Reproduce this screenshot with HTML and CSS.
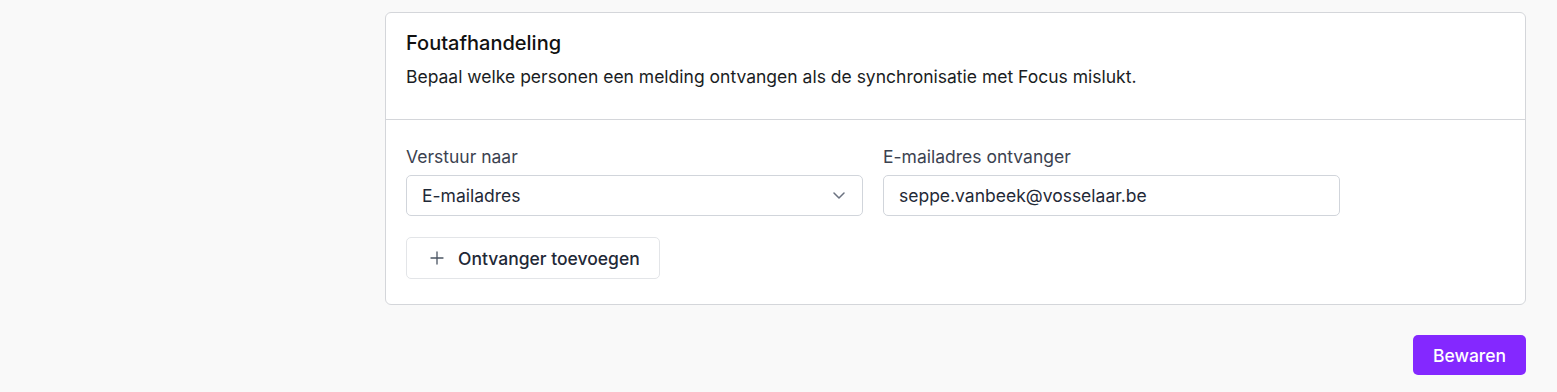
FILE: index.html
```html
<!DOCTYPE html>
<html lang="nl">
<head>
    <meta charset="UTF-8">
    <title>Foutafhandeling</title>
    <link rel="stylesheet" href="styles.css">
</head>
<body>
    <main class="content">
        <section class="card">
            <div class="card-header">
                <h2>Foutafhandeling</h2>
                <p>Bepaal welke personen een melding ontvangen als de synchronisatie met Focus mislukt.</p>
            </div>
            <div class="card-body">
                <div class="fields">
                    <div class="field">
                        <label for="send-to">Verstuur naar</label>
                        <div class="select" id="send-to">
                            <span>E-mailadres</span>
                            <svg width="12" height="7" viewBox="0 0 12 7" fill="none" stroke="#6b7280" stroke-width="1.5" stroke-linecap="round" stroke-linejoin="round"><path d="M1 1l5 5 5-5"/></svg>
                        </div>
                    </div>
                    <div class="field">
                        <label for="email">E-mailadres ontvanger</label>
                        <input type="text" id="email" value="seppe.vanbeek@vosselaar.be">
                    </div>
                </div>
                <button type="button" class="btn-add">
                    <svg width="14" height="14" viewBox="0 0 14 14" fill="none" stroke="#4b5563" stroke-width="1.3" stroke-linecap="round"><path d="M7 1v12M1 7h12"/></svg>
                    Ontvanger toevoegen
                </button>
            </div>
        </section>
        <div class="actions">
            <button type="button" class="btn-save">Bewaren</button>
        </div>
    </main>
</body>
</html>
```

FILE: styles.css
```css
body { margin: 0; background: #f9f9f9; font-family: Inter, "Noto Sans", sans-serif; color: #111827; }
.content { padding: 12px 31px 0 385px; }
.card { background: #fff; border: 1px solid #d4d6da; border-radius: 6px; }
.card-header { padding: 16px 20px 29px; border-bottom: 1px solid #d4d6da; }
.card-header h2 { margin: 0; font-size: 20px; line-height: 28px; font-weight: 500; color: #111; }
.card-header p { margin: 7px 0 0; font-size: 17.5px; line-height: 26px; color: #1a1d23; }
.card-body { padding: 24px 20px 25px; }
.fields { display: grid; grid-template-columns: 457px 457px; gap: 20px; }
.field label { display: block; font-size: 17.5px; line-height: 26px; color: #3b4250; margin-bottom: 5px; }
.select, .field input { box-sizing: border-box; width: 100%; height: 41px; border: 1px solid #d1d5db; border-radius: 5px; background: #fff; font-family: inherit; font-size: 17.5px; color: #1f2937; }
.select { display: flex; align-items: center; justify-content: space-between; padding: 0 17px 0 15px; }
.field input { padding: 0 15px; outline: none; }
.btn-add { display: flex; align-items: center; gap: 14px; margin-top: 21px; height: 42px; padding: 0 19px 0 23px; background: #fff; border: 1px solid #e3e5e8; border-radius: 5px; font-family: inherit; font-size: 17.5px; font-weight: 500; color: #1f2937; cursor: pointer; }
.actions { display: flex; justify-content: flex-end; margin-top: 30px; }
.btn-save { height: 40px; width: 113px; background: #8428ff; color: #fff; border: none; border-radius: 5px; font-family: inherit; font-size: 17.5px; font-weight: 500; cursor: pointer; }
```
